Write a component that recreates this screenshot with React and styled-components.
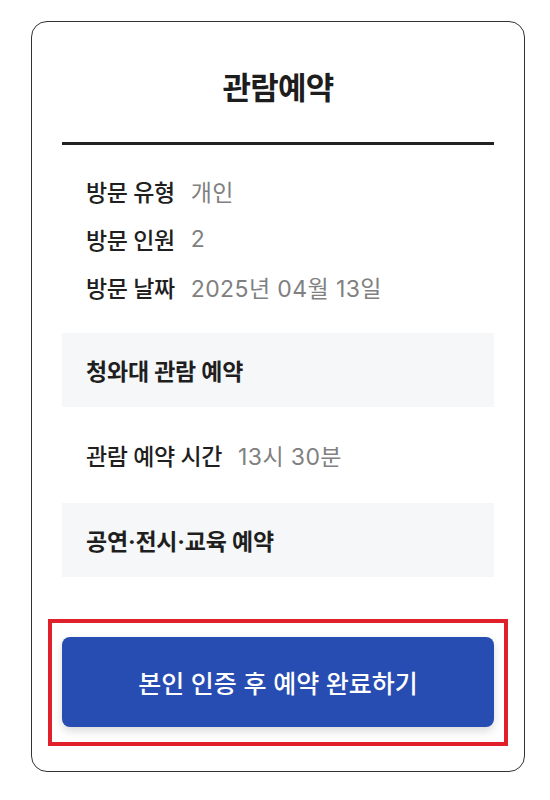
import React from 'react';
import styled, { createGlobalStyle } from 'styled-components';

const GlobalStyle = createGlobalStyle`
    body {
        margin: 0;
        background: #fff;
        font-family: Inter, "Noto Sans CJK KR", "Noto Sans", sans-serif;
        color: #222;
    }
`

const visitInfo = [
    { label: '방문 유형', value: '개인' },
    { label: '방문 인원', value: '2' },
    { label: '방문 날짜', value: '2025년 04월 13일' },
];

function App() {
    return (
        <Page>
            <GlobalStyle />
            <Card>
                <Title>관람예약</Title>
                <InfoList>
                    {visitInfo.map((item) => (
                        <InfoRow key={item.label}>
                            <Label>{item.label}</Label>
                            <Value>{item.value}</Value>
                        </InfoRow>
                    ))}
                </InfoList>
                <Section>청와대 관람 예약</Section>
                <InfoList $spaced>
                    <InfoRow>
                        <Label>관람 예약 시간</Label>
                        <Value>13시 30분</Value>
                    </InfoRow>
                </InfoList>
                <Section>공연·전시·교육 예약</Section>
                <Highlight>
                    <SubmitButton>본인 인증 후 예약 완료하기</SubmitButton>
                </Highlight>
            </Card>
        </Page>
    )
}
export default App;

const Page = styled.div`
    padding: 21px 25px 27px 31px;
`
const Card = styled.div`
    width: 494px;
    box-sizing: border-box;
    border: 1px solid #333;
    border-radius: 16px;
    padding: 0 30px 25px;
`
const Title = styled.h2`
    margin: 0 0 22px;
    padding: 48px 0 36px;
    line-height: 36px;
    font-size: 31px;
    font-weight: 700;
    text-align: center;
    letter-spacing: -0.8px;
    color: #1d1d1d;
    border-bottom: 3px solid #222;
`
const InfoList = styled.div`
    padding: ${props => props.$spaced ? '24px' : '0 24px 22px'};
`
const InfoRow = styled.div`
    display: flex;
    align-items: center;
    gap: 16px;
    height: 48px;
    font-size: 23px;
`
const Label = styled.span`
    font-weight: 500;
    letter-spacing: -0.4px;
    color: #1f1f1f;
`
const Value = styled.span`
    font-weight: 400;
    letter-spacing: 0.4px;
    color: #808080;
`
const Section = styled.div`
    height: 74px;
    display: flex;
    align-items: center;
    padding: 0 24px;
    box-sizing: border-box;
    background: #f6f7f9;
    font-size: 23px;
    font-weight: 700;
    letter-spacing: -0.2px;
    color: #1f1f1f;
`
const Highlight = styled.div`
    margin: 42px -14px 0;
    border: 4px solid #e0202b;
    padding: 14px 10px 15px;
`
const SubmitButton = styled.button`
    display: block;
    width: 100%;
    height: 90px;
    border: none;
    border-radius: 8px;
    background-color: #284db2;
    color: #fff;
    font-family: inherit;
    font-size: 25px;
    font-weight: 500;
    letter-spacing: 0;
    box-shadow: 0 4px 10px rgba(0, 0, 0, 0.15);
    cursor: pointer;
`
